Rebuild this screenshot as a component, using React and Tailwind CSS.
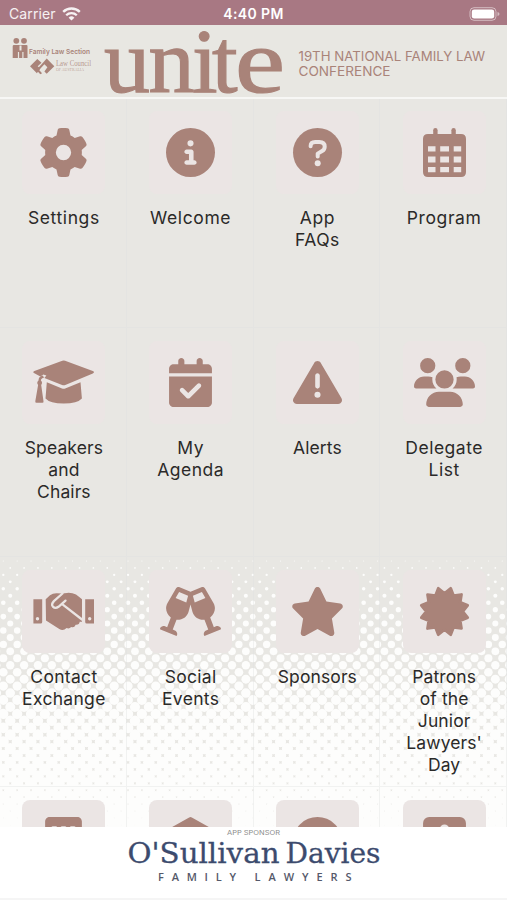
import { FaGlassCheers } from "react-icons/fa";
import {
  FaBuilding,
  FaCalendarCheck,
  FaCircle,
  FaCircleInfo,
  FaGear,
  FaStar,
  FaTriangleExclamation,
  FaUsers,
} from "react-icons/fa6";

function BadgeIcon({ className }) {
  return (
    <svg viewBox="0 0 448 512" className={className} fill="currentColor">
      <path
        fillRule="evenodd"
        d="M64 0h320a64 64 0 0 1 64 64v384a64 64 0 0 1-64 64H64a64 64 0 0 1-64-64V64A64 64 0 0 1 64 0Zm160 78a48 48 0 1 0 0 96 48 48 0 1 0 0-96Z"
      />
    </svg>
  );
}

function RoofIcon({ className }) {
  return (
    <svg viewBox="0 0 512 512" className={className} fill="currentColor">
      <path d="M242 4q14-8 28 0l226 128v48H16v-48ZM48 210h416v302H48Z" />
    </svg>
  );
}

function QuestionIcon({ className }) {
  return (
    <svg viewBox="0 0 49 49" className={className}>
      <circle cx="24.500" cy="24.500" r="24.500" fill="currentColor" />
      <path
        d="M17.600 18.300q0-4.300 4.600-4.300h4.200q5.300 0 5.300 4.700 0 2.800-2.600 4.300l-4.400 2.600v3"
        fill="none"
        stroke="#ebe5e4"
        strokeWidth="4"
        strokeLinecap="round"
        strokeLinejoin="round"
      />
      <circle cx="24.700" cy="35.300" r="3" fill="#ebe5e4" />
    </svg>
  );
}

function CalendarIcon({ className }) {
  return (
    <svg viewBox="0 0 43 49" className={className} fill="currentColor">
      <rect x="10.200" y="0" width="4.400" height="10" rx="2.200" />
      <rect x="28.400" y="0" width="4.400" height="10" rx="2.200" />
      <path
        fillRule="evenodd"
        d="M5 6h33q5 0 5 5v33q0 5-5 5H5q-5 0-5-5V11q0-5 5-5ZM5 18.200v5.400h7.500v-5.400Zm12.200 0v5.400h8.800v-5.400Zm13.500 0v5.400h7.500v-5.400ZM5 28.400v6h7.500v-6Zm12.200 0v6h8.800v-6Zm13.500 0v6h7.500v-6ZM5 39v5.300h7.500V39Zm12.200 0v5.300h8.800V39Zm13.500 0v5.300h7.500V39Z"
      />
    </svg>
  );
}

function CapIcon({ className }) {
  return (
    <svg viewBox="0 0 61 49" className={className} fill="currentColor">
      <path d="M29.300 2.700q1.400-.6 2.800 0l27.700 10.300q2.400 1.200 0 2.400L32.300 27q-1.600.7-3.200 0L11.400 20l2-2.600-3-.9-3 2.100-6-3.300q-2.200-1.100 0-2.300Z" />
      <path d="M13.800 24.200 29 30.500q1.600.7 3.200 0l15.300-6.300 1.400 16.300q-4.500 5-18.200 5t-18.200-5Z" />
      <path d="M9.500 17.600q-4 1-4 5-2.300 2.200-.4 4.400L2.300 43.300q-.2 1.500 1.200 1.500h6q1.200 0 1-1.500L8.200 27q1.800-2.200-.3-4.400 0-2.400 3.300-3.200Z" />
    </svg>
  );
}

function HandshakeIcon({ className }) {
  return (
    <svg viewBox="0 0 61 49" className={className} fill="currentColor">
      <path
        fillRule="evenodd"
        d="M.4 12.200h8.800V35q0 1.600-1.600 1.600H.4Zm4.100 17.900a1.700 1.700 0 1 0 0 3.400 1.700 1.700 0 1 0 0-3.400ZM61 12.200h-8.800V35q0 1.600 1.600 1.600H61Zm-4.300 17.900a1.700 1.700 0 1 0 0 3.400 1.700 1.700 0 1 0 0-3.400Z"
      />
      <path d="M12.700 12.300 17 8.300Q20 6 24 6.200l5 .2 5-.5q5-.4 9 1.700 3 2.300 6 4.700v22.500h-2.300q-.3 3.300-4 3-1.500 3.400-4.500 2.200-2 2.200-4.600 1-3.400 3.300-7.300 1L13 33.500Z" />
      <path
        d="m29.500 6.500-8.600 7.600q-3 3.200-1 5.500 2.400 2.400 5.600.2l7-6.200M29.500 17.300 49 32.500"
        fill="none"
        stroke="#ebe5e4"
        strokeWidth="2.300"
        strokeLinecap="round"
      />
    </svg>
  );
}

// Twelve pointed seal with a notch at the top
const SEAL = Array.from({ length: 24 }, (_, i) => {
  const angle = (i * 15 * Math.PI) / 180;
  const r = i % 2 ? 24 : 18.2;
  return `${(24.5 + r * Math.sin(angle)).toFixed(2)},${(24.5 - r * Math.cos(angle)).toFixed(2)}`;
}).join(" ");

function SealIcon({ className }) {
  return (
    <svg viewBox="0 0 49 49" className={`overflow-visible ${className}`} fill="currentColor">
      <polygon points={SEAL} stroke="currentColor" strokeWidth="2.800" strokeLinejoin="round" />
    </svg>
  );
}

const TILES = [
  { lines: ["Settings"], icon: FaGear, tracking: "tracking-[0.6px]" },
  { lines: ["Welcome"], icon: FaCircleInfo, tracking: "tracking-[0.6px]" },
  { lines: ["App", "FAQs"], icon: QuestionIcon, tracking: "tracking-[0.5px]" },
  { lines: ["Program"], icon: CalendarIcon, tracking: "tracking-[0.6px]" },
  { lines: ["Speakers", "and", "Chairs"], icon: CapIcon },
  { lines: ["My", "Agenda"], icon: FaCalendarCheck, tracking: "tracking-[0.5px]" },
  { lines: ["Alerts"], icon: FaTriangleExclamation },
  { lines: ["Delegate", "List"], icon: FaUsers, tracking: "tracking-[0.5px]" },
  { lines: ["Contact", "Exchange"], icon: HandshakeIcon, tracking: "tracking-[0.3px]" },
  { lines: ["Social", "Events"], icon: FaGlassCheers, tracking: "tracking-[0.3px]" },
  { lines: ["Sponsors"], icon: FaStar },
  { lines: ["Patrons", "of the", "Junior", "Lawyers'", "Day"], icon: SealIcon },
  { lines: [], icon: FaBuilding },
  { lines: [], icon: RoofIcon },
  { lines: [], icon: FaCircle },
  { lines: [], icon: BadgeIcon },
];

// [y, radius] stops for the halftone, measured from the top of the pattern
const STOPS = [
  [0, 0.3],
  [12, 0.8],
  [30, 1.6],
  [55, 2.6],
  [90, 3.7],
  [125, 4.5],
  [150, 5],
  [190, 5.6],
  [230, 6.1],
  [272, 6.9],
];

function radiusAt(y) {
  for (let i = 1; i < STOPS.length; i++) {
    const [y0, r0] = STOPS[i - 1];
    const [y1, r1] = STOPS[i];
    if (y <= y1) return r0 + ((r1 - r0) * (y - y0)) / (y1 - y0);
  }
  return 6.9;
}

const DOTS = [];
for (let row = 0; row < 40; row++) {
  for (let col = 0; col < 76; col++) {
    if ((row + col) % 2 === 0) continue;
    const y = 6 + row * 6.95;
    DOTS.push({ x: 3.3 + (col - 1) * 6.93, y, r: radiusAt(y) });
  }
}

function Halftone() {
  return (
    <svg className="absolute left-0 top-[555px] h-[273px] w-[507px]" viewBox="0 0 507 273">
      {DOTS.map((d, i) => (
        <circle key={i} cx={d.x} cy={d.y} r={d.r} fill="#fdfdfc" />
      ))}
    </svg>
  );
}

function StatusBar() {
  return (
    <div className="grid h-[25px] shrink-0 grid-cols-3 items-center bg-[#a87883] px-[9px] pt-[2px] text-[14px] text-white/90">
      <div className="flex items-center gap-[6px]">
        <span className="tracking-[0.1px]">Carrier</span>
        <svg className="h-[14px] w-[19px]" viewBox="0 0 19 14" fill="none" stroke="currentColor">
          <path d="M1.2 4.9a12 12 0 0 1 16.6 0" strokeWidth="2.4" />
          <path d="M4.2 8.2a7.6 7.6 0 0 1 10.6 0" strokeWidth="2.3" />
          <path d="M6.6 10.7a4.2 4.2 0 0 1 5.8 0L9.5 13.6Z" fill="currentColor" stroke="none" />
        </svg>
      </div>
      <div className="text-center font-semibold tracking-[0.4px] text-white">4:40 PM</div>
      <svg className="-mr-[2px] h-[14px] w-[31px] justify-self-end" viewBox="0 0 31 14">
        <rect x="1" y=".7" width="26" height="12.6" rx="4" fill="none" stroke="#fff" strokeOpacity=".5" />
        <rect x="2.8" y="2.4" width="22.4" height="9.2" rx="2.4" fill="#fff" />
        <path d="M28.5 5v4q2-.6 2-2t-2-2" fill="#fff" fillOpacity=".5" />
      </svg>
    </div>
  );
}

function Header() {
  return (
    <header className="h-[74px] shrink-0 border-b-2 border-[#f7f7f5] bg-[#e8e7e2]">
      <svg className="h-[72px] w-[507px] overflow-visible" viewBox="0 25 507 72" fill="#a98379">
        <circle cx="16.3" cy="40.8" r="2.9" />
        <circle cx="24" cy="40.8" r="2.9" />
        <path d="M14 45h12.5q1 0 1 1v12h-4v-6h-1.2v6h-3.2v-6h-1.2v6H12.7V46.300q0-1.300 1.300-1.300Z" />
        <path d="M19.500 45.500h2v5h-2Z" fill="#e8e7e2" />
        <text x="29" y="53.500" fontSize="6.500" fontWeight="600" textLength="61" lengthAdjust="spacingAndGlyphs" fontFamily="Inter, sans-serif">
          Family Law Section
        </text>
        <path d="m30 66.200 7.300-7.300 4.200 3.800-3.800 3.500 2.600 2.400-3.400 4.600Z" />
        <path d="m42.500 63.200 4.200-4.700 7.600 7.700-7.600 7.600-2.300-2.300 3-4.300-3-3-5.300 5.800 3 3.200-1.800 1-4-4.200Z" />
        <text x="56" y="66" fontSize="7.500" fillOpacity=".8" textLength="35" lengthAdjust="spacingAndGlyphs" fontFamily="'Liberation Serif', serif">
          Law Council
        </text>
        <text x="56" y="71" fontSize="3.300" fillOpacity=".7" textLength="28" lengthAdjust="spacingAndGlyphs" fontFamily="'Liberation Serif', serif">
          OF AUSTRALIA
        </text>
        <text y="92" fontSize="92" fontFamily="'Liberation Serif', serif" stroke="#a98379" strokeWidth="1.200">
          <tspan x="104 148.500 192 212">unit</tspan>
          <tspan x="235" textLength="50" lengthAdjust="spacingAndGlyphs">e</tspan>
        </text>
        <g fontSize="13.200" fontFamily="Inter, sans-serif">
          <text x="298.500" y="60.700" textLength="186.500" lengthAdjust="spacingAndGlyphs">19TH NATIONAL FAMILY LAW</text>
          <text x="298.500" y="76.200" textLength="92" lengthAdjust="spacingAndGlyphs">CONFERENCE</text>
        </g>
      </svg>
    </header>
  );
}

function Tile({ tile }) {
  const Icon = tile.icon;
  return (
    <div className="flex flex-col items-center border-b border-r border-[#dfe0e2]/40 pl-[2px] pt-[13px]">
      <div className="flex h-[83px] w-[83px] shrink-0 items-center justify-center rounded-[8px] bg-[#ebe5e4]">
        <Icon className="h-[49px] w-[61px] text-[#a98379]" />
      </div>
      <div className={`mt-[13px] text-center text-[17.5px] leading-[22px] text-[#2b2a29] ${tile.tracking || "tracking-[0.1px]"}`}>
        {tile.lines.map((line) => (
          <div key={line}>{line}</div>
        ))}
      </div>
    </div>
  );
}

function Sponsor() {
  return (
    <footer className="relative h-[73px] shrink-0 border-b-2 border-[#f5f5f5] bg-white">
      <svg className="h-[71px] w-[507px]" viewBox="0 827 507 71">
        <text x="227" y="835.300" fontSize="6.500" fill="#8b8b8b" textLength="53" lengthAdjust="spacingAndGlyphs" fontFamily="Inter, sans-serif">
          APP SPONSOR
        </text>
        <g fontSize="27" fill="#3c4b6e" stroke="#3c4b6e" strokeWidth=".3" fontFamily="'DejaVu Serif', serif">
          <text x="127.500" y="862.500" textLength="152" lengthAdjust="spacingAndGlyphs">O'Sullivan</text>
          <text x="285.500" y="862.500" textLength="95" lengthAdjust="spacingAndGlyphs">Davies</text>
        </g>
        <g fontSize="11" fill="#55596a" fontFamily="'Open Sans', sans-serif" fontWeight="600">
          <text x="158" y="880.700" textLength="78">FAMILY</text>
          <text x="254.500" y="880.700" textLength="97">LAWYERS</text>
        </g>
      </svg>
    </footer>
  );
}

export default function App() {
  return (
    <div className="relative flex h-[900px] w-[507px] flex-col overflow-hidden bg-[#e8e7e3] font-['Inter',sans-serif]">
      <Halftone />
      <StatusBar />
      <Header />
      <main className="relative min-h-0 flex-1 overflow-hidden">
        <div className="-mt-px grid auto-rows-[229.500px] grid-cols-4">
          {TILES.map((tile, i) => (
            <Tile key={i} tile={tile} />
          ))}
        </div>
      </main>
      <Sponsor />
    </div>
  );
}
